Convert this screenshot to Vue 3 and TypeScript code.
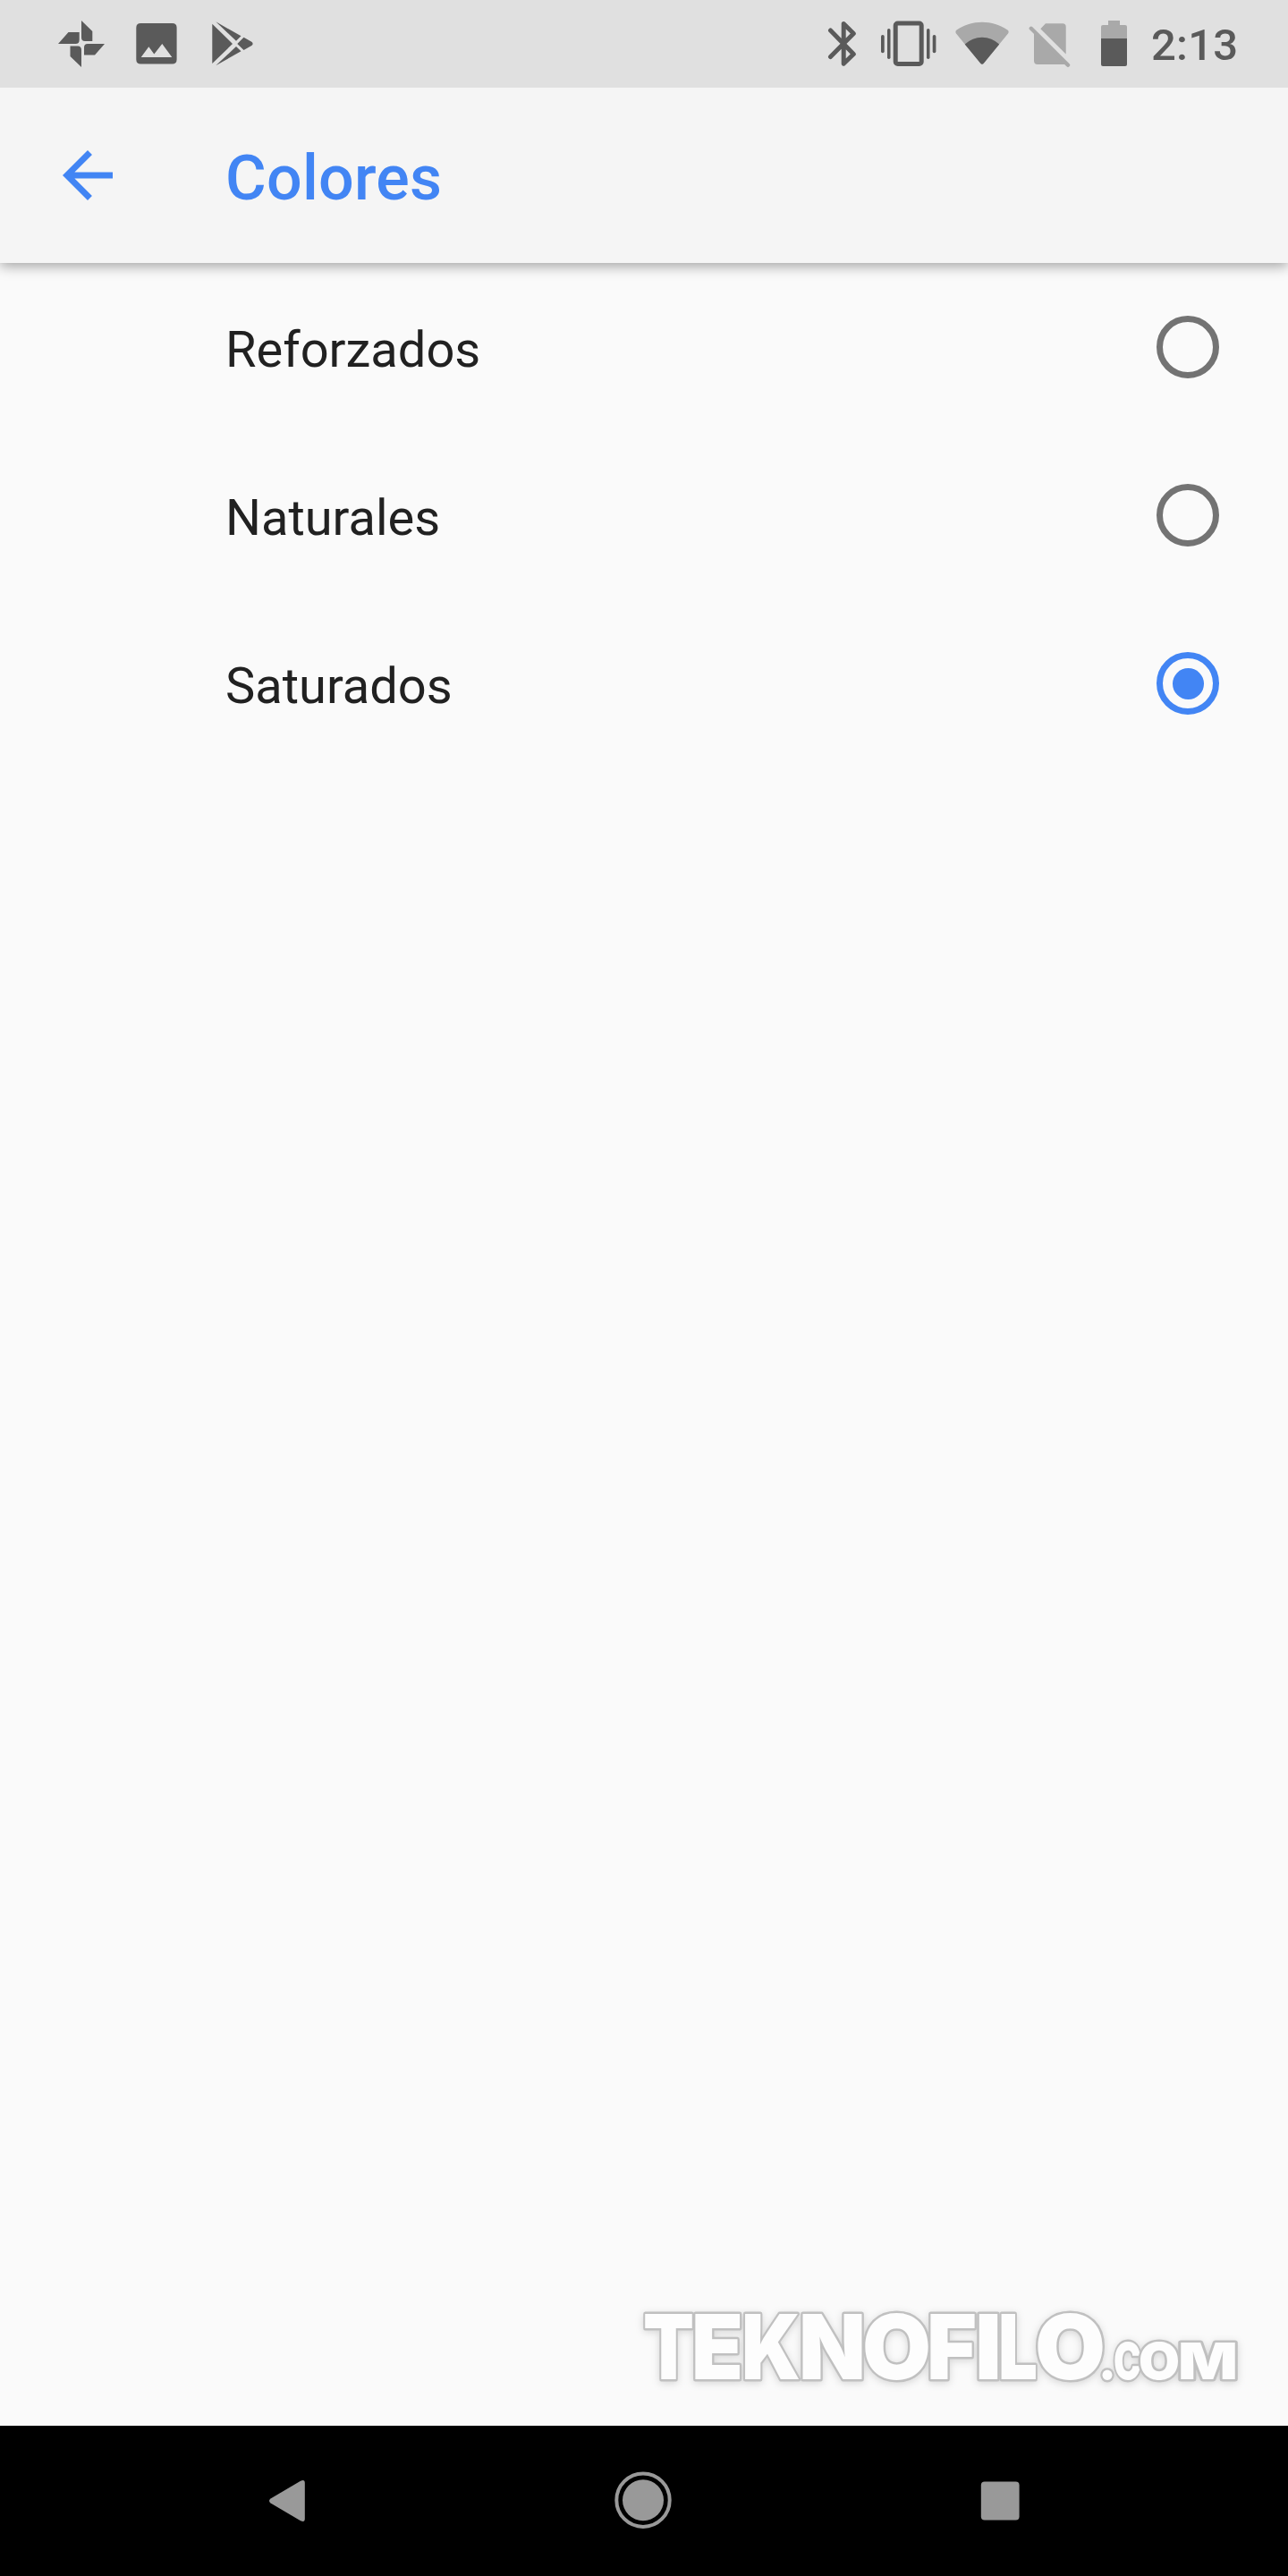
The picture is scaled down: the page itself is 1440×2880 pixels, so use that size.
<script setup lang="ts">
import { ref } from 'vue'

const modes = ['Reforzados', 'Naturales', 'Saturados']
const selected = ref('Saturados')

interface Letter {
  ch: string
  x: number
  w: number
}

// Wordmark letters: pen position and advance width, relative to the mark's left edge
const wordmark: Letter[] = [
  { ch: 'T', x: -1, w: 57 },
  { ch: 'E', x: 53, w: 58 },
  { ch: 'K', x: 109, w: 66 },
  { ch: 'N', x: 173, w: 75 },
  { ch: 'O', x: 244, w: 77 },
  { ch: 'F', x: 316, w: 56 },
  { ch: 'I', x: 370, w: 30 },
  { ch: 'L', x: 396, w: 44 },
  { ch: 'O', x: 437, w: 79 },
]
const suffix: Letter[] = [
  { ch: '.', x: 508, w: 20 },
  { ch: 'c', x: 525, w: 31 },
  { ch: 'o', x: 553, w: 46 },
  { ch: 'm', x: 597, w: 67 },
]
</script>

<template>
  <div class="screen">
    <header class="status">
      <svg class="ic photos" width="54" height="98" viewBox="64 0 54 98">
        <path d="M91 23 103.300 35V46H95Q91 46 91 42ZM65 49 76.500 36H88.700V44.500Q88.700 49 84.500 49ZM94 61.500V53Q94 49 98 49H117L106 61.500ZM91 75 78.500 63V51.500H87Q91 51.500 91 56Z" />
      </svg>
      <svg class="ic image" width="46" height="98" viewBox="152 0 46 98">
        <path fill-rule="evenodd" d="M157.300 26H192.600Q197.600 26 197.600 31V66.500Q197.600 71.500 192.600 71.500H157.300Q152.300 71.500 152.300 66.500V31Q152.300 26 157.300 26ZM157.700 64H192.300L181.300 49 172.300 60.500 166.300 52.300Z" />
      </svg>
      <svg class="ic play" width="48" height="98" viewBox="236 0 48 98">
        <path d="M237.300 26.700 260 49 237.300 71ZM241.300 24.300 269.500 40.300 264 45.800ZM241.300 73.300 269.500 57.300 264 52ZM272.500 41.700 281.300 46.800Q284 49 281.300 51L272.500 56 265.300 49Z" />
      </svg>

      <span class="spacer"></span>

      <svg class="ic" width="34" height="98" viewBox="925 0 34 98">
        <path class="line" d="M928.500 34 954.300 60.500 943.200 71.200V26.500L954.300 37.500 928.500 63.500" />
      </svg>
      <svg class="ic vibrate" width="64" height="98" viewBox="984 0 64 98">
        <rect class="line" x="1001.200" y="26" width="29" height="45.500" rx="2.500" />
        <rect x="985" y="39" width="3.700" height="20.300" rx="1.800" />
        <rect x="992" y="32" width="3.500" height="34" rx="1.700" />
        <rect x="1036" y="32" width="3.500" height="34" rx="1.700" />
        <rect x="1042.700" y="39" width="3.700" height="20.300" rx="1.800" />
      </svg>
      <svg class="ic wifi" width="62" height="98" viewBox="1067 0 62 98">
        <path class="dim" d="M1069 37.500Q1067.500 35 1069.600 33.400C1086 21.800 1110 21.800 1126.400 33.400Q1128.500 35 1127 37.500L1100 70.500Q1098 73 1096 70.500Z" />
        <path d="M1078.700 49.500Q1087 41.800 1098 41.700 1109 41.800 1117.200 49.500L1100 70.500Q1098 73 1096 70.500Z" />
      </svg>
      <svg class="ic sim" width="48" height="98" viewBox="1150 0 48 98">
        <path class="dim" d="M1163.300 32.300 1169 26.300H1188Q1191.700 26.300 1191.700 30V60.500ZM1156 35 1192 71.500 1190 72H1160Q1156 72 1156 68Z" />
        <path class="dim-line" d="M1152.800 31.800 1194 72.800" />
      </svg>
      <svg class="ic battery" width="30" height="98" viewBox="1231 0 30 98">
        <path class="dim" d="M1239 23H1252V28H1258Q1260 28 1260 30V44H1231V30Q1231 28 1233 28H1239Z" />
        <path d="M1231 43H1260V72Q1260 74 1258 74H1233Q1231 74 1231 72Z" />
      </svg>
      <span class="clock">2:13</span>
    </header>

    <div class="toolbar">
      <svg class="back" width="84" height="84" viewBox="0 0 24 24">
        <path d="M20 11H7.830l5.590-5.590L12 4l-8 8 8 8 1.410-1.410L7.830 13H20v-2z" />
      </svg>
      <h1>Colores</h1>
    </div>

    <main>
      <div v-for="mode in modes" :key="mode" class="row" @click="selected = mode">
        <span class="label">{{ mode }}</span>
        <span class="radio" :class="{ on: mode === selected }"></span>
      </div>
    </main>

    <svg class="watermark" width="680" height="110" viewBox="0 0 680 110">
      <text y="85"><tspan v-for="(l, i) in wordmark" :key="i" :x="l.x" :textLength="l.w" lengthAdjust="spacingAndGlyphs">{{ l.ch }}</tspan><tspan v-for="l in suffix" :key="l.ch" class="small" :x="l.x" :textLength="l.w" lengthAdjust="spacingAndGlyphs">{{ l.ch }}</tspan></text>
    </svg>

    <nav>
      <svg width="42" height="168" viewBox="300 0 42 168">
        <path d="M336 61.800Q340.800 59.500 340.800 64V104Q340.800 108.500 336 106.200L302.500 86.500Q299.500 84 302.500 81.500Z" />
      </svg>
      <svg width="64" height="168" viewBox="687.300 0 64 168">
        <circle cx="719.300" cy="83.200" r="29.700" class="ring" />
        <circle cx="719.300" cy="83.200" r="23" />
      </svg>
      <svg width="44" height="168" viewBox="1096 0 44 168">
        <rect x="1096.800" y="62.600" width="42.800" height="42.800" rx="4" />
      </svg>
    </nav>
  </div>
</template>

<style>
body {
  margin: 0;
  background: #fafafa;
}
</style>

<style scoped>
.screen {
  display: flex;
  flex-direction: column;
  width: 1440px;
  height: 2880px;
  background: #fafafa;
  font-family: Roboto, 'Liberation Sans', sans-serif;
  overflow: hidden;
}
svg {
  display: block;
  flex: none;
}
.status {
  position: relative;
  z-index: 1;
  display: flex;
  flex: none;
  height: 98px;
  box-sizing: border-box;
  padding: 0 56px 0 64px;
  background: #e0e0e0;
}
.ic {
  fill: #5a5a5a;
}
.image {
  margin-left: 34px;
}
.play {
  margin-left: 38px;
}
.spacer {
  flex: 1;
}
.vibrate {
  margin-left: 25px;
}
.wifi {
  margin-left: 19px;
}
.sim {
  margin-left: 21px;
}
.battery {
  margin-left: 33px;
}
.line {
  fill: none;
  stroke: #5a5a5a;
  stroke-width: 5;
  stroke-linecap: round;
  stroke-linejoin: round;
}
.dim {
  fill: #a9a9a9;
}
.dim-line {
  stroke: #a9a9a9;
  stroke-width: 4.4;
  stroke-linecap: round;
}
.clock {
  width: 98px;
  margin-left: 25px;
  padding: 2px 0 0 1px;
  box-sizing: border-box;
  font-size: 49px;
  font-weight: 500;
  line-height: 98px;
  letter-spacing: 0.2px;
  color: #5a5a5a;
  white-space: nowrap;
}
.toolbar {
  display: flex;
  flex: none;
  align-items: center;
  height: 196px;
  padding-left: 56px;
  background: #f5f5f5;
  box-shadow: 0 3px 14px rgba(0, 0, 0, 0.38);
}
.back {
  fill: #4285f4;
}
h1 {
  margin: 6px 0 0 112px;
  font-size: 70px;
  font-weight: 500;
  line-height: 82px;
  letter-spacing: 0.25px;
  color: #4285f4;
}
main {
  flex: 1;
}
.row {
  display: flex;
  align-items: center;
  justify-content: space-between;
  height: 188px;
  padding: 0 77px 0 252px;
}
.label {
  padding-top: 5px;
  font-size: 56px;
  line-height: 66px;
  color: #212121;
}
.radio {
  display: flex;
  align-items: center;
  justify-content: center;
  width: 70px;
  height: 70px;
  box-sizing: border-box;
  border: 7px solid #737373;
  border-radius: 50%;
}
.radio.on {
  border-color: #4285f4;
}
.radio.on::after {
  content: '';
  width: 35px;
  height: 35px;
  border-radius: 50%;
  background: #4285f4;
}
.watermark {
  align-self: flex-end;
  margin: 0 40px 27px 0;
  overflow: visible;
  filter: drop-shadow(0 2px 4px rgba(0, 0, 0, 0.14));
}
.watermark text {
  font-family: Inter, Roboto, sans-serif;
  font-size: 101px;
  font-weight: 900;
  fill: #fdfdfd;
  stroke: #c0c0c0;
  stroke-width: 5;
  stroke-linejoin: round;
  paint-order: stroke;
}
.watermark .small {
  font-size: 57px;
  text-transform: uppercase;
}
nav {
  display: flex;
  flex: none;
  justify-content: space-between;
  height: 168px;
  padding: 0 300px;
  background: #000;
  fill: #999;
}
.ring {
  fill: none;
  stroke: #999;
  stroke-width: 4;
}
</style>
